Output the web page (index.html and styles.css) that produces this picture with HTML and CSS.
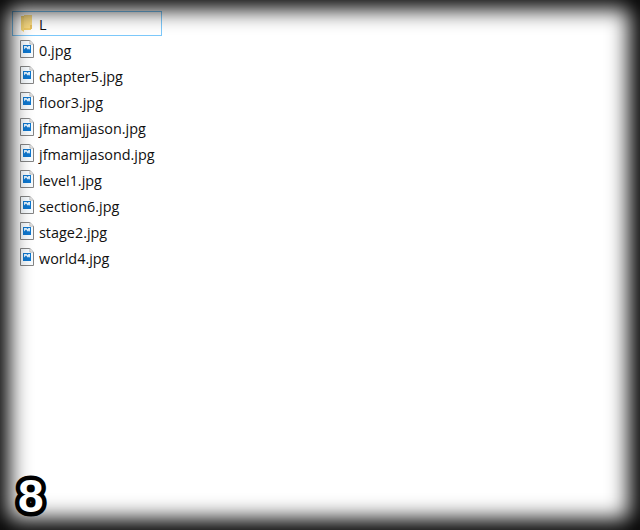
FILE: index.html
```
<!DOCTYPE html>
<html lang="en">
<head>
<meta charset="utf-8">
<title>Files</title>
<link rel="stylesheet" href="styles.css">
</head>
<body>
<svg class="defs" width="0" height="0" aria-hidden="true">
  <symbol id="image-file" viewBox="0 0 14 18">
    <path d="M.5.5h9.3l3.7 3.7v13.3H.5z" fill="#f8fcff" stroke="#858585"/>
    <path d="M9.9.7v3.4h3.4" fill="#f4f4f4" stroke="#a0a0a0" stroke-width=".7"/>
    <path d="M3 5h8v8H3z" fill="#0f78d0"/>
    <path d="M4 6h6v4L9 8.5 8 9.8 6 7.5 4 9.5z" fill="#e4f4ff"/>
    <path d="M6.5 6h2L7.5 7z" fill="#0f78d0"/>
  </symbol>
</svg>
<main class="window">
  <ul class="files">
    <li class="file file--selected">
      <svg class="icon" viewBox="0 0 14 18"><path d="M1 2h10v14H1z" fill="#f4cf69"/><path d="M4 1h8v13H4z" fill="#fbdc83"/><path d="M1 2l3 2v14l-3-2z" fill="#f8d875"/><path d="M10 11h2v4h-2z" fill="#e8c15e"/></svg>
      <span class="name">L</span>
    </li>
    <li class="file"><svg class="icon"><use href="#image-file"/></svg><span class="name">0.jpg</span></li>
    <li class="file"><svg class="icon"><use href="#image-file"/></svg><span class="name">chapter5.jpg</span></li>
    <li class="file"><svg class="icon"><use href="#image-file"/></svg><span class="name">floor3.jpg</span></li>
    <li class="file"><svg class="icon"><use href="#image-file"/></svg><span class="name">jfmamjjason.jpg</span></li>
    <li class="file"><svg class="icon"><use href="#image-file"/></svg><span class="name">jfmamjjasond.jpg</span></li>
    <li class="file"><svg class="icon"><use href="#image-file"/></svg><span class="name">level1.jpg</span></li>
    <li class="file"><svg class="icon"><use href="#image-file"/></svg><span class="name">section6.jpg</span></li>
    <li class="file"><svg class="icon"><use href="#image-file"/></svg><span class="name">stage2.jpg</span></li>
    <li class="file"><svg class="icon"><use href="#image-file"/></svg><span class="name">world4.jpg</span></li>
  </ul>
  <div class="badge">8</div>
</main>
</body>
</html>
```
FILE: styles.css
```
* { box-sizing: border-box; }
body { margin: 0; background: #fff; font-family: "Open Sans", "Noto Sans", sans-serif; }
.defs { position: absolute; }
.window { position: relative; width: 640px; height: 530px; padding: 11px 12px; overflow: hidden; background: #fff; }
.window::after { content: ""; position: absolute; inset: 0; box-shadow: inset -1px -1px 21px 10px #000; pointer-events: none; }
.files { margin: 0; padding: 0; list-style: none; }
.file { display: flex; align-items: center; width: 150px; height: 26px; padding: 0 0 0 8px; }
.file--selected { height: 25px; margin-bottom: 1px; padding-left: 7px; border: 1px solid #7cc8fa; }
.icon { flex: none; width: 14px; height: 18px; margin-top: -2px; }
.name { margin-left: 5px; padding-top: 1px; font-size: 15px; line-height: 23px; color: #111; white-space: nowrap; transform: scaleX(.96); transform-origin: left; }
.badge { position: absolute; z-index: 1; left: 18px; bottom: 9px; font: bold 46px/50px "Liberation Sans", sans-serif; color: #fff; -webkit-text-stroke: 9px #000; paint-order: stroke fill; }
```
